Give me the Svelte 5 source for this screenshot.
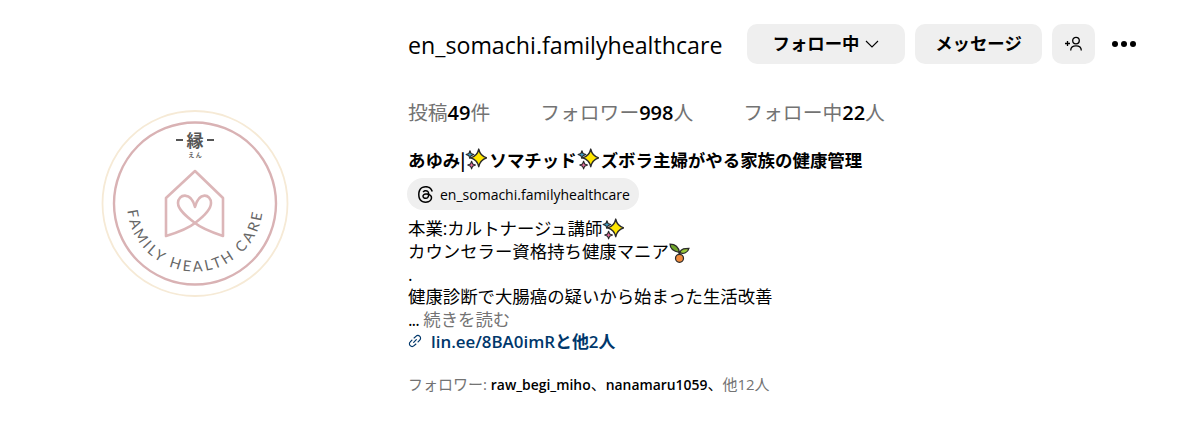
<script>
  const stats = [
    { label: "投稿", value: "49", unit: "件" },
    { label: "フォロワー", value: "998", unit: "人" },
    { label: "フォロー中", value: "22", unit: "人" },
  ];
</script>

{#snippet sparkle()}
  <svg class="sparkle" viewBox="0 0 20 20" width="22" height="22">
    <path d="M12.500 1 Q13.800 7.200 19.800 9 Q13.800 10.800 12.500 17 Q11.200 10.800 5.200 9 Q11.200 7.200 12.500 1 Z" fill="#ffe600" stroke="#2a2a2a" stroke-width="1.300" stroke-linejoin="round" />
    <path d="M4.500 2.500 L5.500 5 L8 6 L5.500 7 L4.500 9.500 L3.500 7 L1 6 L3.500 5 Z" fill="#3f9fc9" stroke="#2a2a2a" stroke-width="1" stroke-linejoin="round" />
    <path d="M6 12 L7 14.500 L9.500 15.500 L7 16.500 L6 19 L5 16.500 L2.500 15.500 L5 14.500 Z" fill="#e56f9f" stroke="#2a2a2a" stroke-width="1" stroke-linejoin="round" />
  </svg>
{/snippet}

<main>
  <div class="avatar-col">
    <svg class="avatar" viewBox="0 0 188 188" width="188" height="188">
      <circle cx="94" cy="93.500" r="92.500" fill="#fff" stroke="#f6ead6" stroke-width="1.800" />
      <circle cx="94" cy="93.500" r="81" fill="none" stroke="#d9b2b4" stroke-width="2.400" />
      <text x="94" y="37" class="kanji">縁</text>
      <path d="M75 30 H82 M106 30 H113" stroke="#555" stroke-width="1.800" />
      <text x="94" y="47" class="kana">え ん</text>
      <path d="M65 126 V88 L94 61 L122 88 V126 C110 122 100 118 94 113 C86 107 77 100 77 93 C77 84 90 81 94 97 C98 81 110 84 110 93 C110 100 102 107 94 113 C88 118 78 122 65 126 Z" fill="none" stroke="#dcb6b8" stroke-width="2.600" stroke-linejoin="round" />
      <defs>
        <path id="arc" d="M 35.100 59.500 A 68 68 0 1 0 152.900 59.500" />
      </defs>
      <text class="arc-text"><textPath href="#arc" startOffset="50%" text-anchor="middle">FAMILY HEALTH CARE</textPath></text>
    </svg>
  </div>

  <section class="profile">
    <div class="top-row">
      <h2>en_somachi.familyhealthcare</h2>
      <div class="actions">
        <button class="btn following">
          フォロー中
          <svg viewBox="0 0 14 8" width="14" height="8"><path d="M1 1 L7 7 L13 1" fill="none" stroke="#000" stroke-width="1.100" /></svg>
        </button>
        <button class="btn message">メッセージ</button>
        <button class="btn add" aria-label="add">
          <svg viewBox="0 0 20 16" width="20" height="16">
            <path d="M1 7.500 H6 M3.500 5 V10" stroke="#000" stroke-width="1.300" />
            <circle cx="12" cy="4.600" r="3.300" fill="none" stroke="#000" stroke-width="1.300" />
            <path d="M6.700 14.500 C6.700 11 9 9.800 12 9.800 C15 9.800 17.300 11 17.300 14.500" fill="none" stroke="#000" stroke-width="1.300" />
          </svg>
        </button>
        <div class="more"><i></i><i></i><i></i></div>
      </div>
    </div>

    <ul class="stats">
      {#each stats as s}
        <li>{s.label}<b>{s.value}</b>{s.unit}</li>
      {/each}
    </ul>

    <div class="name">あゆみ|{@render sparkle()}ソマチッド{@render sparkle()}ズボラ主婦がやる家族の健康管理</div>

    <div class="threads">
      <svg viewBox="0 0 24 24" width="17" height="19">
        <path d="M12.186 24h-.007c-3.581-.024-6.334-1.205-8.184-3.509C2.350 18.440 1.500 15.586 1.472 12.010v-.017c.03-3.579.879-6.430 2.525-8.482C5.845 1.205 8.600.024 12.180 0h.014c2.746.020 5.043.725 6.826 2.098 1.677 1.290 2.858 3.130 3.509 5.467l-2.040.569c-1.104-3.960-3.898-5.984-8.304-6.015-2.910.022-5.110.936-6.540 2.717C4.307 6.504 3.616 8.914 3.589 12c.027 3.086.718 5.496 2.057 7.164 1.430 1.783 3.631 2.698 6.540 2.717 2.623-.020 4.358-.631 5.800-2.045 1.647-1.613 1.618-3.593 1.090-4.798-.310-.710-.873-1.300-1.634-1.750-.192 1.352-.622 2.446-1.284 3.272-.886 1.102-2.140 1.704-3.730 1.790-1.202.065-2.361-.218-3.259-.801-1.063-.689-1.685-1.740-1.752-2.964-.065-1.190.408-2.285 1.330-3.082.880-.760 2.119-1.207 3.583-1.291a13.853 13.853 0 0 1 3.020.142c-.126-.742-.375-1.332-.750-1.757-.513-.586-1.308-.883-2.359-.890h-.029c-.844 0-1.992.232-2.721 1.320L7.734 7.847c.980-1.454 2.568-2.256 4.478-2.256h.044c3.194.020 5.097 1.975 5.287 5.388.108.046.216.094.321.142 1.490.700 2.580 1.761 3.154 3.070.797 1.820.871 4.790-1.548 7.158-1.850 1.810-4.094 2.628-7.277 2.650Zm1.003-11.690c-.242 0-.487.007-.739.021-1.836.103-2.980.946-2.916 2.143.067 1.256 1.452 1.839 2.784 1.767 1.224-.065 2.818-.543 3.086-3.710a10.500 10.500 0 0 0-2.215-.221z" fill="#000" />
      </svg>
      <span>en_somachi.familyhealthcare</span>
    </div>

    <div class="bio">
      <div>本業:カルトナージュ講師{@render sparkle()}</div>
      <div>カウンセラー資格持ち健康マニア<svg class="sprout" viewBox="0 0 20 20" width="21" height="21">
          <path d="M10 10 C9 4 5 2 1 2 C1 6 4 9 10 10 Z" fill="#6fa52a" stroke="#2a2a2a" stroke-width="1.200" />
          <path d="M10 10 C12 6 15 6 19 6 C18 10 14 12 10 10 Z" fill="#9ac93a" stroke="#2a2a2a" stroke-width="1.200" />
          <path d="M10 9 V14" stroke="#2a2a2a" stroke-width="2" />
          <circle cx="10" cy="15.500" r="3.800" fill="#f08a3c" stroke="#2a2a2a" stroke-width="1.200" />
        </svg></div>
      <div>.</div>
      <div>健康診断で大腸癌の疑いから始まった生活改善</div>
      <div><span class="dots">...</span> <span class="muted">続きを読む</span></div>
    </div>

    <div class="link">
      <svg viewBox="0 0 16 16" width="14" height="14">
        <path d="M6.500 9.500 L9.500 6.500 M7 4.500 L9 2.700 C10.300 1.500 12.300 1.500 13.500 2.700 C14.700 3.900 14.600 5.800 13.400 7 L11.500 9 M9 11.500 L7 13.300 C5.700 14.500 3.700 14.500 2.500 13.300 C1.300 12.100 1.400 10.200 2.600 9 L4.500 7" fill="none" stroke="#00376b" stroke-width="1.400" stroke-linecap="round" />
      </svg>
      <span>lin.ee/8BA0imRと他2人</span>
    </div>

    <div class="followed">フォロワー: <b>raw_begi_miho</b><span class="ten">、</span><b>nanamaru1059</b><span class="ten">、</span>他12人</div>
  </section>
</main>

<style>
  :global(body) {
    background: #fff;
    font-family: "Open Sans", "Noto Sans CJK JP", sans-serif;
    color: #000;
  }

  main {
    display: flex;
    align-items: flex-start;
    height: 441px;
    box-sizing: border-box;
    padding-top: 24px;
  }

  .avatar-col {
    width: 408px;
    flex-shrink: 0;
    box-sizing: border-box;
    padding: 86px 0 0 101px;
  }

  .avatar {
    display: block;
  }

  .kanji {
    font-family: "Noto Sans CJK JP", sans-serif;
    font-size: 17px;
    font-weight: 700;
    fill: #555;
    text-anchor: middle;
  }

  .kana {
    font-family: "Noto Sans CJK JP", sans-serif;
    font-size: 6px;
    font-weight: 700;
    fill: #666;
    text-anchor: middle;
  }

  .arc-text {
    font-family: "Lato", sans-serif;
    font-size: 14.500px;
    letter-spacing: 2.800px;
    fill: #666;
  }

  .top-row {
    display: flex;
    align-items: center;
    height: 40px;
  }

  h2 {
    margin: 0;
    padding-top: 2px;
    font-size: 23.200px;
    font-weight: 400;
    width: 339px;
    white-space: nowrap;
  }

  .actions {
    display: flex;
    align-items: center;
    gap: 10px;
  }

  .btn {
    display: flex;
    align-items: center;
    justify-content: center;
    gap: 6px;
    height: 40px;
    border: 0;
    border-radius: 10px;
    background: #efefef;
    font: 700 17.400px "Noto Sans CJK JP", sans-serif;
    color: #000;
    padding: 0 0 3px;
  }

  .btn svg {
    margin-top: 3px;
  }

  .following {
    width: 158px;
  }

  .message {
    width: 127px;
  }

  .add {
    width: 43px;
  }

  .more {
    display: flex;
    gap: 3px;
    margin-left: 7px;
  }

  .more i {
    width: 6px;
    height: 6px;
    border-radius: 50%;
    background: #000;
  }

  .stats {
    display: flex;
    gap: 50px;
    list-style: none;
    margin: 24px 0 0;
    padding: 0;
    height: 48px;
    font-size: 19.800px;
    line-height: 48px;
    color: #737373;
    font-family: "Noto Sans CJK JP", sans-serif;
  }

  .stats b {
    font-family: "Open Sans", sans-serif;
    font-size: 20px;
    font-weight: 600;
    color: #000;
  }

  .name {
    display: flex;
    align-items: center;
    margin-top: 12px;
    height: 22px;
    font: 700 17.450px "Noto Sans CJK JP", sans-serif;
  }

  .sparkle {
    flex-shrink: 0;
    vertical-align: -5px;
    margin-right: 2px;
  }

  .threads {
    display: inline-flex;
    align-items: center;
    gap: 6px;
    height: 32px;
    margin: 8px 0 0 -1px;
    padding: 0 9px 0 10px;
    border-radius: 16px;
    background: #efefef;
    font-size: 14px;
  }

  .bio {
    margin-top: 7px;
    font-size: 17.400px;
    line-height: 22.800px;
    font-family: "Open Sans", "Noto Sans CJK JP", sans-serif;
  }

  .bio > div {
    height: 22.800px;
    white-space: nowrap;
  }

  .sprout {
    vertical-align: -5px;
  }

  .dots {
    letter-spacing: -1px;
  }

  .muted {
    color: #737373;
  }

  .link {
    display: flex;
    align-items: center;
    gap: 9px;
    height: 22px;
    margin-top: -1px;
    font-size: 16.900px;
    font-weight: 600;
    color: #00376b;
  }

  .followed {
    margin-top: 21px;
    font-size: 15px;
    color: #737373;
  }

  .followed b {
    font-size: 13.900px;
    font-weight: 600;
    color: #000;
  }

  .ten {
    color: #000;
  }
</style>
